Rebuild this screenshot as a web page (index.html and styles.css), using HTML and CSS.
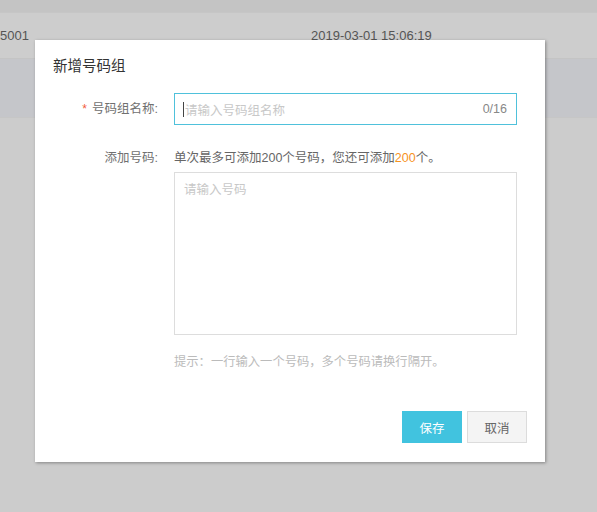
FILE: index.html
```html
<!DOCTYPE html>
<html lang="zh-CN">
<head>
<meta charset="utf-8">
<title>新增号码组</title>
<link rel="stylesheet" href="styles.css">
</head>
<body>
<div class="page">
  <div class="band-top"></div>
  <div class="row row-plain">
    <span class="cell cell-id">5001</span>
    <span class="cell cell-time">2019-03-01 15:06:19</span>
  </div>
  <div class="row row-hl"></div>
  <div class="rest"></div>
</div>

<div class="dialog">
  <div class="dialog-title">新增号码组</div>
  <div class="dialog-body">
    <div class="form-row">
      <div class="label label-mid"><span class="req">*</span>号码组名称:</div>
      <div class="input focus">
        <span class="caret"></span>
        <span class="placeholder">请输入号码组名称</span>
        <span class="count">0/16</span>
      </div>
    </div>
    <div class="form-row row-gap">
      <div class="label label-top">添加号码:</div>
      <div class="field">
        <div class="note">单次最多可添加200个号码，您还可添加<span class="orange">200</span>个。</div>
        <div class="textarea"><span class="placeholder">请输入号码</span></div>
        <div class="hint">提示：一行输入一个号码，多个号码请换行隔开。</div>
      </div>
    </div>
  </div>
  <div class="dialog-footer">
    <button class="btn btn-primary">保存</button>
    <button class="btn btn-default">取消</button>
  </div>
</div>
</body>
</html>
```

FILE: styles.css
```css
* { box-sizing: border-box; }
html, body { margin: 0; padding: 0; }
body {
  width: 597px;
  height: 512px;
  overflow: hidden;
  background: #cccccc;
  font-family: "Liberation Sans", "Noto Sans CJK SC", sans-serif;
  font-size: 12px;
  color: #666;
}
.page { display: flex; flex-direction: column; }
.band-top { height: 13px; background: #c4c4c4; border-bottom: 1px solid #c6c6c6; }
.row { display: flex; align-items: center; }
.row-plain { height: 46px; background: #cdcdcd; border-bottom: 1px solid #c4c4c4; }
.row-hl { height: 59px; background: #c5c6ca; border-bottom: 1px solid #c6c6c6; }
.rest { flex: 1; }
.cell { font-size: 13px; color: #555; }
.cell-id { margin-left: 0; width: 311px; }

.dialog {
  position: absolute;
  left: 35px;
  top: 40px;
  width: 510px;
  height: 422px;
  background: #fff;
  box-shadow: 1px 1px 3px rgba(0,0,0,0.35);
  display: flex;
  flex-direction: column;
}
.dialog-title {
  padding: 16px 18px 0;
  font-size: 14.5px;
  line-height: 20px;
  color: #333;
}
.dialog-body {
  padding: 17px 28px 0 18px;
  flex: 1;
}
.form-row {
  display: grid;
  grid-template-columns: 105px 1fr;
  column-gap: 16px;
}
.row-gap { margin-top: 23px; }
.label { text-align: right; color: #707070; font-size: 12.5px; }
.label-mid { line-height: 32px; }
.label-top { line-height: 20px; }
.req { color: #f25b3c; margin-right: 5px; font-size: 12px; }
.input {
  height: 32px;
  border: 1px solid #4fc1db;
  display: flex;
  align-items: center;
  padding: 0 9px 0 8px;
}
.caret { width: 1px; height: 15px; background: #444; margin-right: 1px; }
.placeholder { color: #c8c8c8; font-size: 12.5px; }
.count { margin-left: auto; color: #888; font-size: 12.5px; }
.note { line-height: 20px; font-size: 12.5px; color: #666; }
.orange { color: #f7931e; }
.textarea {
  margin-top: 4px;
  height: 163px;
  border: 1px solid #ddd;
  padding: 8px 9px;
  line-height: 18px;
}
.hint { margin-top: 17px; line-height: 20px; color: #bbbbbb; font-size: 12.3px; }
.dialog-footer {
  display: flex;
  justify-content: flex-end;
  gap: 5px;
  padding: 0 18px 19px 0;
}
.btn {
  width: 60px;
  height: 32px;
  font-family: inherit;
  font-size: 12.5px;
  border: 1px solid transparent;
  padding: 0;
}
.btn-primary { background: #41c3df; color: #fff; border-color: #41c3df; }
.btn-default { background: #f4f4f4; color: #666; border-color: #dcdcdc; }
```
